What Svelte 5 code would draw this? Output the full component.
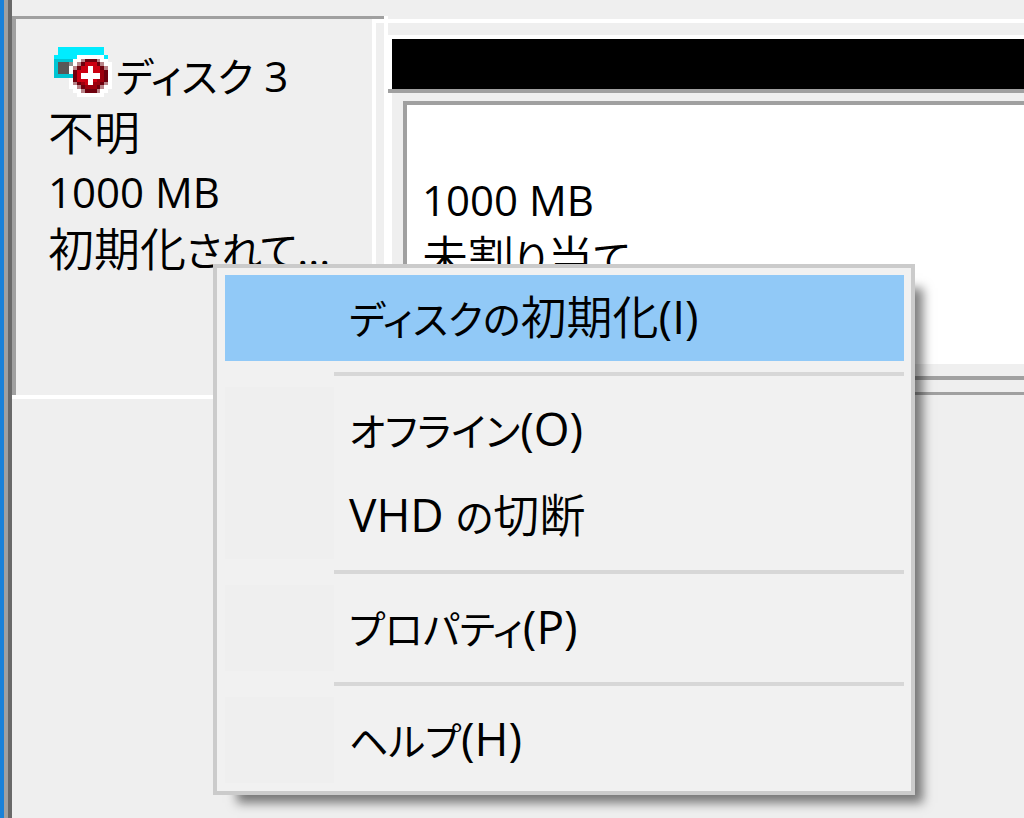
<script>
  const palette = {
    c: '#00ecff', t: '#00c4d2', k: '#585858', l: '#909090',
    w: '#ffffff', g: '#b78388', d: '#6e000d', r: '#9c000d', b: '#cc0011'
  };
  const pixels = [
    ' cccccccccccc  ',
    ' cccccccccccc  ',
    'ccccccwwwwwwwc ',
    'tttttwwgdddgww ',
    'tkkklwgdbbbdgww',
    'tkkkwgdbbbbbdgw',
    'tkkkwdbbbbbbrdw',
    'tttttdbbbbbbrdw',
    '    wdbbbbbrrdw',
    '    wgdrbbrrdgw',
    '    wwgdrrrdgww',
    '     wwgdddgww ',
    '      wwwwwww  '
  ];
  const cells = pixels.flatMap((row, y) =>
    [...row].map((key, x) => ({ x, y, key })).filter((p) => p.key !== ' ')
  );
  const groups = [
    [{ label: 'ディスクの初期化(I)', active: true }],
    [{ label: 'オフライン(O)' }, { label: 'VHD の切断' }],
    [{ label: 'プロパティ(P)' }],
    [{ label: 'ヘルプ(H)' }]
  ];

  const runs = (text) =>
    text.match(/[\u3040-\u30ff]+|[\x20-\x7e]+|[^\x20-\x7e\u3040-\u30ff]+/g).map((part) => ({
      part,
      kind: /^[\u3040-\u30ff]/.test(part) ? 'kana' : /^[\x20-\x7e]/.test(part) ? 'latin' : 'kanji'
    }));
</script>

{#snippet mixed(text)}{#each runs(text) as run}<span class={run.kind}>{run.part}</span>{/each}{/snippet}

<main class="window">
  <section class="disk-row">
    <div class="disk">
      <h1>
        <svg viewBox="0 0 15 13" preserveAspectRatio="none" shape-rendering="crispEdges" aria-hidden="true">
          {#each cells as p}
            <rect x={p.x} y={p.y} width="1" height="1" fill={palette[p.key]} />
          {/each}
          <path fill="#fff" d="M8.8 5h1.4v1.8h1.8v1.4h-1.8v1.8h-1.4v-1.8h-1.8v-1.4h1.8z" />
        </svg>
        <span>{@render mixed('ディスク 3')}</span>
      </h1>
      <p>{@render mixed('不明')}</p>
      <p>{@render mixed('1000 MB')}</p>
      <p>{@render mixed('初期化されて...')}</p>
    </div>
    <div class="gutter"></div>
    <div class="volumes">
      <div class="stripe"></div>
      <div class="volume-frame">
        <div class="volume">
          <p>{@render mixed('1000 MB')}</p>
          <p>{@render mixed('未割り当て')}</p>
        </div>
      </div>
    </div>
  </section>

  <div class="menu" role="menu">
    {#each groups as group, i}
      {#if i > 0}<hr />{/if}
      {#each group as item}
        <button role="menuitem" class:active={item.active}>{@render mixed(item.label)}</button>
      {/each}
    {/each}
  </div>
</main>

<style>
  :global(body) {
    margin: 0;
    background: #efefef;
  }
  .window {
    box-sizing: border-box;
    position: relative;
    min-height: 100vh;
    padding: 16px 0 0 12px;
    overflow: hidden;
    color: #000;
    background: linear-gradient(90deg, #1a81d8 4px, #a0a0a0 4px 8px, #696969 8px 12px, #efefef 12px);
    font: 350 46px/58px "Noto Sans CJK JP", sans-serif;
    font-feature-settings: "palt";
  }
  h1, p {
    margin: 0;
    font-size: inherit;
    font-weight: inherit;
    white-space: pre;
  }
  .latin, .kana {
    line-height: 40px;
  }
  .latin {
    font-family: "Open Sans", sans-serif;
    font-size: 42px;
    font-weight: 400;
  }
  .kana {
    font-size: 40px;
    font-weight: 400;
  }
  .disk-row {
    display: grid;
    grid-template-columns: 364px 12px minmax(0, 1fr);
    height: 383px;
  }
  .disk {
    box-sizing: border-box;
    border-top: 3px solid #a0a0a0;
    box-shadow: inset -4px -4px #fff, inset 4px 0 #a0a0a0;
    padding: 24px 0 0 36px;
  }
  h1 {
    display: flex;
    gap: 4px;
  }
  svg {
    width: 58px;
    height: 50px;
    margin: 4px 0 0 6px;
  }
  .gutter {
    box-shadow: inset -4px 0 #fff, inset 0 3px #a0a0a0, inset 0 7px #fff;
  }
  .volumes {
    padding-top: 19px;
    background: linear-gradient(#efefef 3px, #fff 3px 7px, #efefef 7px);
  }
  .stripe {
    height: 58px;
    background: #000;
    box-shadow: inset 0 -4px #a0a0a0, inset 4px 4px #fff;
  }
  .volume-frame {
    box-sizing: border-box;
    height: 302px;
    padding: 8px 0 0 11px;
    border-left: 4px solid #fff;
    border-bottom: 3px solid #a0a0a0;
  }
  .volume {
    box-sizing: border-box;
    height: 279px;
    padding: 62px 0 0 15px;
    background: linear-gradient(#fff 259px, #efefef 259px);
    border: solid #a0a0a0;
    border-width: 4px 0 4px 4px;
  }
  .menu {
    box-sizing: border-box;
    position: absolute;
    left: 213px;
    top: 264px;
    width: 702px;
    padding: 7px 7px 8px 8px;
    border: 4px solid #cbcbcb;
    background: #f1f1f1;
    box-shadow: 16px 16px 10px -8px rgb(0 0 0 / 50%);
  }
  button {
    display: block;
    width: 100%;
    height: 86px;
    padding: 0 0 8px 124px;
    border: 0;
    background: linear-gradient(90deg, #efefef 109px, #f1f1f1 109px);
    color: inherit;
    font: inherit;
    font-feature-settings: inherit;
    text-align: left;
    white-space: pre;
  }
  button .latin {
    font-size: 46px;
  }
  button .kana {
    font-size: 39px;
  }
  .active {
    background: #91c9f7;
  }
  hr {
    height: 4px;
    margin: 0;
    border: solid #f1f1f1;
    border-width: 11px 0;
    background: linear-gradient(90deg, #f1f1f1 109px, #d7d7d7 109px);
  }
</style>
